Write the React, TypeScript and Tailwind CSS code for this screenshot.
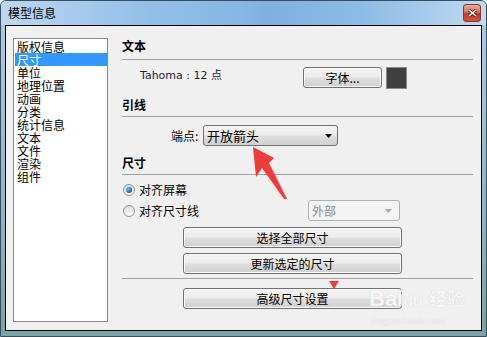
const cjk = { fontFamily: '"Noto Sans CJK SC", "Noto Sans", sans-serif' };

const items = ["版权信息", "尺寸", "单位", "地理位置", "动画", "分类", "统计信息", "文本", "文件", "渲染", "组件"];

const btn =
  "flex h-[21px] items-center justify-center rounded-[3px] border border-[#707070] bg-[linear-gradient(#f4f4f4_0%,#ececec_48%,#dedede_52%,#d0d0d0_100%)] shadow-[inset_0_0_0_1px_#fbfbfb] text-[12px] leading-none text-black";

function Header({ children }: { children: string }) {
  return (
    <>
      <div className="flex h-[16px] items-center text-[12px] font-bold leading-none text-black">{children}</div>
    </>
  );
}

function Radio({ checked }: { checked?: boolean }) {
  return (
    <span className="flex h-[12px] w-[12px] items-center justify-center rounded-full border border-[#8e8f8f] bg-[linear-gradient(#dcdcdc,#fbfbfb)]">
      {checked && (
        <span className="h-[6px] w-[6px] rounded-full bg-[radial-gradient(circle_at_35%_35%,#7cc4f4,#1a6bb0_60%,#0b3f73)]" />
      )}
    </span>
  );
}

export default function App() {
  return (
    <div className="relative h-[337px] w-[487px] overflow-hidden rounded-t-[6px] border border-[#3b4c5e] bg-[linear-gradient(#aecde9,#8fb6c8_60%,#78a4a4)]" style={cjk}>
      <div className="flex h-[24px] items-center justify-between bg-[linear-gradient(90deg,#bcd7f0_0%,#93c0e9_30%,#86b6e4_50%,#7fb0e0_55%,#8ebce7_75%,#c0daf1_100%)] pl-[7px] pr-[5px]">
        <span className="text-[12px] leading-none text-black">模型信息</span>
        <span className="flex h-[18px] w-[18px] items-center justify-center rounded-[3px] border border-[#7b3b2e] bg-[linear-gradient(#eba898_0%,#d9705a_45%,#c4381d_55%,#d3583c_100%)]">
          <svg width="9" height="8" viewBox="0 0 9 8">
            <path d="M1 1 L8 7 M8 1 L1 7" stroke="#4a1a10" strokeWidth="3" />
            <path d="M1 1 L8 7 M8 1 L1 7" stroke="#ffffff" strokeWidth="1.6" />
          </svg>
        </span>
      </div>
      <div className="px-[4px] pb-[5px]">
        <div className="flex h-[306px] border border-black bg-[#f0f0f0] pl-[7px] pr-[8px] pt-[12px]">
          <div className="h-[284px] w-[95px] border border-[#828790] bg-white pt-[1px]">
            {items.map((t, i) => (
              <div
                key={t}
                className={
                  "ml-[1px] h-[13px] pl-[2px] text-[12px] leading-[13px] " +
                  (i === 1 ? "bg-[#3399ff] text-white" : "text-black")
                }
              >
                {t}
              </div>
            ))}
          </div>
          <div className="ml-[14px] flex flex-1 flex-col">
            <Header>文本</Header>
            <div className="mt-[5px] border-t border-[#a0a0a0]" />
            <div className="mt-[7px] flex h-[22px] items-start pl-[18px]">
              <span className="mt-[1px] w-[163px] text-[11px] leading-[13px] text-[#1c1c3a]" style={{ fontFamily: '"DejaVu Sans", "Noto Sans CJK SC", sans-serif' }}>
                Tahoma : 12 <span style={cjk}>点</span>
              </span>
              <div className={btn + " w-[79px]"}>字体...</div>
              <div className="ml-[4px] h-[22px] w-[21px] border border-[#8a8a8a] bg-[#404040]" />
            </div>
            <div className="mt-[8px]">
              <Header>引线</Header>
            </div>
            <div className="mt-[3px] border-t border-[#a0a0a0]" />
            <div className="mt-[8px] flex items-center pl-[49px]">
              <span className="w-[32px] text-[12px] leading-none text-black">端点:</span>
              <div className="flex h-[21px] w-[135px] items-center justify-between rounded-[3px] border border-[#707070] bg-[linear-gradient(#f4f4f4_0%,#ececec_48%,#dedede_52%,#d0d0d0_100%)] pl-[3px] pr-[5px] text-[13px] leading-none text-black">
                <span>开放箭头</span>
                <svg width="7" height="4" viewBox="0 0 7 4">
                  <path d="M0 0 H7 L3.5 4 Z" fill="#000" />
                </svg>
              </div>
            </div>
            <div className="mt-[9px]">
              <Header>尺寸</Header>
            </div>
            <div className="mt-[3px] border-t border-[#a0a0a0]" />
            <div className="mt-[5px] flex h-[20px] items-center gap-[4px] pl-[1px] text-[12px] leading-none text-black">
              <Radio checked />
              <span>对齐屏幕</span>
            </div>
            <div className="flex h-[21px] items-center text-[12px] leading-none text-black">
              <div className="flex w-[186px] items-center gap-[4px] pl-[1px]">
                <Radio />
                <span>对齐尺寸线</span>
              </div>
              <div className="flex h-[21px] w-[92px] items-center justify-between rounded-[3px] border border-[#adb2b5] bg-[#f4f4f4] pl-[3px] pr-[7px] text-[12px] text-[#8d8d8d]">
                <span>外部</span>
                <svg width="7" height="4" viewBox="0 0 7 4">
                  <path d="M0 0 H7 L3.5 4 Z" fill="#a8a8a8" />
                </svg>
              </div>
            </div>
            <div className={btn + " ml-[61px] mt-[6px] w-[219px]"}>选择全部尺寸</div>
            <div className={btn + " ml-[61px] mt-[5px] w-[219px]"}>更新选定的尺寸</div>
            <div className="mt-[4px] border-t border-[#a0a0a0]" />
            <div className={btn + " ml-[61px] mt-[9px] w-[219px]"}>高级尺寸设置</div>
          </div>
        </div>
      </div>

      <svg className="pointer-events-none absolute left-0 top-0" width="487" height="337">
        <polygon points="252,146 273,157 268,162 286,198 283,198 261,167 255,176" fill="#f23a3a" />
        <polygon points="328,280 338,280 333,288" fill="#f23a3a" />
      </svg>
      <div className="pointer-events-none absolute left-[368px] top-[287px] text-[22px] font-bold leading-none text-[#f6f6f6] [text-shadow:0_0_1px_#c8c8c8]" style={{ fontFamily: '"Liberation Sans", "Noto Sans CJK SC", sans-serif' }}>
        Bai<span className="text-[16px]">du</span> <span className="text-[18px]">经验</span>
      </div>
      <div className="pointer-events-none absolute left-[370px] top-[315px] text-[10px] leading-none text-[#f6f6f6] [text-shadow:0_0_1px_#c8c8c8]" style={{ fontFamily: '"Liberation Serif", serif' }}>
        jingyan.baidu.com
      </div>
    </div>
  );
}
